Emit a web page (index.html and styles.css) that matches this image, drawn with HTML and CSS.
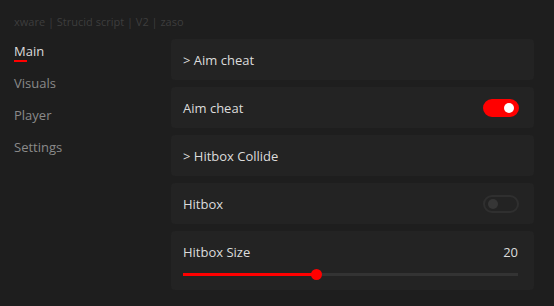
FILE: index.html
```html
<!DOCTYPE html>
<html lang="en">
<head>
    <meta charset="UTF-8">
    <meta name="viewport" content="width=device-width, initial-scale=1.0">
    <title>xware</title>
    <link rel="stylesheet" href="styles.css">
</head>
<body>
    <div class="window">
        <div class="title">xware | Strucid script | V2 | zaso</div>

        <div class="main">
            <!-- tabs -->
            <div class="sidebar">
                <div class="tab active">Main</div>
                <div class="tab">Visuals</div>
                <div class="tab">Player</div>
                <div class="tab">Settings</div>
            </div>

            <!-- options -->
            <div class="options">
                <div class="card">&gt; Aim cheat</div>
                <div class="card">
                    <span>Aim cheat</span>
                    <div class="toggle on"><div class="knob"></div></div>
                </div>
                <div class="card">&gt; Hitbox Collide</div>
                <div class="card">
                    <span>Hitbox</span>
                    <div class="toggle"><div class="knob"></div></div>
                </div>
                <div class="card slider-card">
                    <div class="slider-head">
                        <span>Hitbox Size</span>
                        <span>20</span>
                    </div>
                    <div class="slider">
                        <div class="slider-fill" style="width: 40%"><div class="slider-knob"></div></div>
                    </div>
                </div>
                <div class="card">&gt; Silent aim</div>
                <div class="card">
                    <span>Silent aim</span>
                    <div class="toggle"><div class="knob"></div></div>
                </div>
                <div class="card">&gt; Triggerbot</div>
                <div class="card">
                    <span>Triggerbot</span>
                    <div class="toggle"><div class="knob"></div></div>
                </div>
                <div class="card">&gt; Misc</div>
                <div class="card">
                    <span>No recoil</span>
                    <div class="toggle"><div class="knob"></div></div>
                </div>
            </div>
        </div>
    </div>
</body>
</html>
```

FILE: styles.css
```css
* {
    margin: 0;
    padding: 0;
    box-sizing: border-box;
}

html, body {
    height: 100%;
}

body {
    font-family: 'Open Sans', 'Liberation Sans', sans-serif;
    background: #1e1e1e;
    color: #dcdcdc;
    overflow: hidden;
}

.window {
    height: 100%;
    display: flex;
    flex-direction: column;
}

.title {
    height: 39px;
    padding: 14px 14px 0;
    font-size: 11px;
    line-height: 16px;
    color: #3d3d3d;
}

.main {
    flex: 1;
    min-height: 0;
    display: flex;
    padding-bottom: 13px;
}

.sidebar {
    width: 171px;
    padding: 4px 14px 0;
    display: flex;
    flex-direction: column;
}

.tab {
    height: 32px;
    font-size: 13px;
    line-height: 16px;
    color: #8a8a8a;
    position: relative;
}

.tab.active {
    color: #dcdcdc;
}

.tab.active::after {
    content: '';
    position: absolute;
    left: 0;
    top: 17px;
    width: 13px;
    height: 2px;
    background: #ff0000;
}

.options {
    flex: 1;
    margin-right: 10px;
    padding-right: 10px;
    overflow-y: auto;
    display: flex;
    flex-direction: column;
    gap: 7px;
}

.options::-webkit-scrollbar {
    width: 3px;
}

.options::-webkit-scrollbar-track {
    background: transparent;
}

.options::-webkit-scrollbar-thumb {
    background: #8c8c8c;
}

.card {
    flex: none;
    height: 41px;
    background: #232323;
    border-radius: 4px;
    padding: 0 15px 0 12px;
    display: flex;
    align-items: center;
    justify-content: space-between;
    font-size: 13px;
}

.toggle {
    width: 36px;
    height: 18px;
    border-radius: 9px;
    border: 2px solid #2f2f2f;
    position: relative;
}

.toggle .knob {
    position: absolute;
    top: 2px;
    left: 3px;
    width: 10px;
    height: 10px;
    border-radius: 50%;
    background: #363636;
}

.toggle.on {
    background: #ff0000;
    border-color: #ff0000;
}

.toggle.on .knob {
    left: auto;
    right: 3px;
    background: #ffffff;
}

.slider-card {
    height: 59px;
    flex-direction: column;
    align-items: stretch;
    justify-content: flex-start;
    padding: 13px 16px 0 12px;
}

.slider-head {
    display: flex;
    justify-content: space-between;
    line-height: 16px;
}

.slider {
    margin-top: 13px;
    height: 3px;
    background: #333333;
}

.slider-fill {
    height: 100%;
    background: #ff0000;
    position: relative;
}

.slider-knob {
    position: absolute;
    right: -5px;
    top: -4px;
    width: 11px;
    height: 11px;
    border-radius: 50%;
    background: #ff0000;
}
```
